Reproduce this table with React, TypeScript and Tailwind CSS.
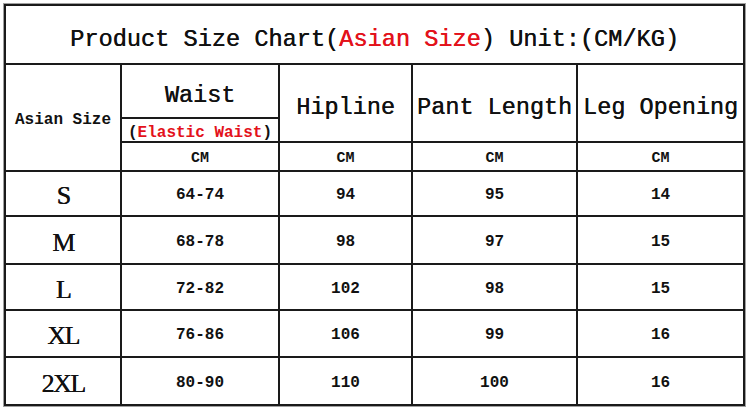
import React from "react"

type Row = {
    size: string;
    waist: string;
    hip: string;
    length: string;
    leg: string;
}

const rows: Row[] = [
    { size: 'S', waist: '64-74', hip: '94', length: '95', leg: '14' },
    { size: 'M', waist: '68-78', hip: '98', length: '97', leg: '15' },
    { size: 'L', waist: '72-82', hip: '102', length: '98', leg: '15' },
    { size: 'XL', waist: '76-86', hip: '106', length: '99', leg: '16' },
    { size: '2XL', waist: '80-90', hip: '110', length: '100', leg: '16' },
]

const mono = "font-['Liberation_Mono','DejaVu_Sans_Mono',monospace]"
const serif = "font-['Liberation_Serif','Times_New_Roman',serif]"
// heavier look for the big regular-weight text
const thick = "[text-shadow:0.4px_0_0_currentColor]"

const Cell: React.FC<{ className?: string; children?: React.ReactNode }> = ({ className, children }) => (
    <div className={`bg-white flex items-center justify-center text-[#111] ${className ?? ''}`}>{children}</div>
)

const App: React.FC = () => {
    return (
        <div className="w-[750px] h-[410px] bg-white pt-[4px] pl-[4px]">
            <div className="w-[741px] grid grid-cols-[114px_156px_131px_163px_165px] grid-rows-[57px_52px_22px_27px_43px_46px_44px_45px_46px] gap-[2px] p-[2px] bg-[#1a1a1a] shadow-[0_0_0_1px_#a0a0a0]">
                <Cell className={`col-span-5 ${mono} ${thick} text-[23.6px] pt-[10px] whitespace-pre`}>
                    Product Size Chart(<span className="text-[#e3121b]">Asian Size</span>) Unit:(CM/KG)
                </Cell>
                <Cell className={`row-span-3 ${mono} text-[16px] font-bold pt-[4px]`}>Asian Size</Cell>
                <Cell className={`${mono} ${thick} text-[23.5px] pt-[10px]`}>Waist</Cell>
                <Cell className={`row-span-2 ${mono} ${thick} text-[23.5px] pt-[10px]`}>Hipline</Cell>
                <Cell className={`row-span-2 ${mono} ${thick} text-[23.5px] pt-[10px]`}>Pant Length</Cell>
                <Cell className={`row-span-2 ${mono} ${thick} text-[23.5px] pt-[10px]`}>Leg Opening</Cell>
                <Cell className={`${mono} text-[16px] font-bold whitespace-pre pt-[6px]`}>
                    (<span className="text-[#e3121b]">Elastic Waist</span>)
                </Cell>
                {['CM', 'CM', 'CM', 'CM'].map((u, i) => (
                    <Cell key={i} className={`${mono} text-[15px] font-bold pt-[5px]`}>{u}</Cell>
                ))}
                {rows.map((r) => (
                    <React.Fragment key={r.size}>
                        <Cell className={`${serif} ${thick} text-[26px] tracking-[-1.5px] pt-[4px]`}>{r.size}</Cell>
                        <Cell className={`${mono} text-[16px] font-bold pt-[3px]`}>{r.waist}</Cell>
                        <Cell className={`${mono} text-[16px] font-bold pt-[3px]`}>{r.hip}</Cell>
                        <Cell className={`${mono} text-[16px] font-bold pt-[3px]`}>{r.length}</Cell>
                        <Cell className={`${mono} text-[16px] font-bold pt-[3px]`}>{r.leg}</Cell>
                    </React.Fragment>
                ))}
            </div>
        </div>
    )
}

export default App;
